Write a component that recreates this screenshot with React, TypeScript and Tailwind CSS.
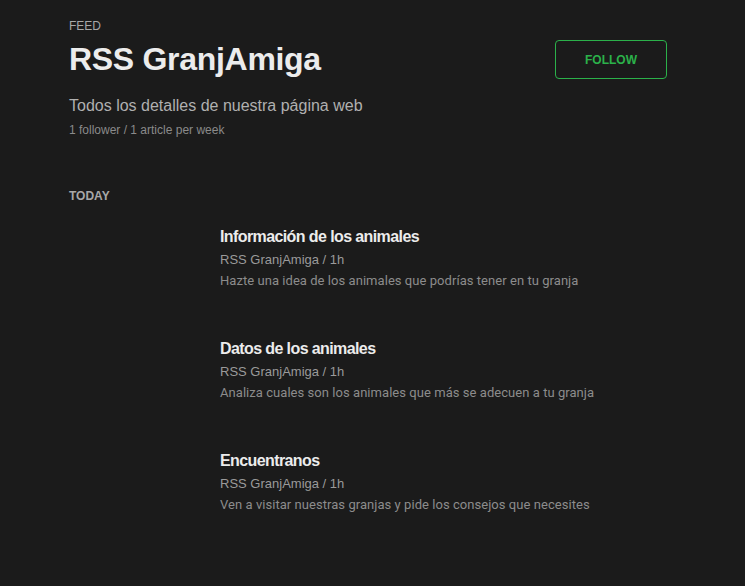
const articles = [
  {
    title: 'Información de los animales',
    description: 'Hazte una idea de los animales que podrías tener en tu granja',
  },
  {
    title: 'Datos de los animales',
    description: 'Analiza cuales son los animales que más se adecuen a tu granja',
  },
  {
    title: 'Encuentranos',
    description: 'Ven a visitar nuestras granjas y pide los consejos que necesites',
  },
]

function ArticleRow({ title, description }: { title: string; description: string }) {
  return (
    <div className="pl-[151px] h-[112px]">
      <h3 className="text-[16px] leading-[20px] font-bold text-[#ececec] tracking-[-0.6px]">{title}</h3>
      <p className="mt-[4px] text-[13px] leading-[18px] text-[#9a9a9a]">RSS GranjAmiga / 1h</p>
      <p className="mt-[3px] text-[13px] leading-[18px] text-[#8c8c8c] font-['Roboto',sans-serif] tracking-[0.05px]">
        {description}
      </p>
    </div>
  )
}

export default function App() {
  return (
    <div className="min-h-[586px] bg-[#1b1b1b] font-['Liberation_Sans',Arial,sans-serif]">
      <div className="px-[69px] pt-[18px]">
        {/* Feed header */}
        <div className="flex items-start justify-between pr-[9px]">
          <div>
            <p className="text-[12px] leading-[16px] text-[#a8a8a8]">FEED</p>
            <h1 className="mt-[5px] text-[32px] leading-[40px] font-bold text-[#ececec] tracking-[-0.3px]">
              RSS GranjAmiga
            </h1>
            <p className="mt-[17px] text-[16px] leading-[20px] text-[#b0b0b0]">
              Todos los detalles de nuestra página web
            </p>
            <p className="mt-[6px] text-[12px] leading-[16px] text-[#8a8a8a]">1 follower / 1 article per week</p>
          </div>
          <button className="mt-[22px] w-[112px] h-[39px] pt-[1px] rounded-[4px] border border-[#2bb14a] text-[12px] font-bold text-[#2bb14a]">
            FOLLOW
          </button>
        </div>

        {/* Today */}
        <p className="mt-[50px] text-[12px] leading-[16px] font-bold text-[#a8a8a8]">TODAY</p>
        <div className="mt-[23px]">
          {articles.map((a) => (
            <ArticleRow key={a.title} title={a.title} description={a.description} />
          ))}
        </div>
      </div>
    </div>
  )
}
